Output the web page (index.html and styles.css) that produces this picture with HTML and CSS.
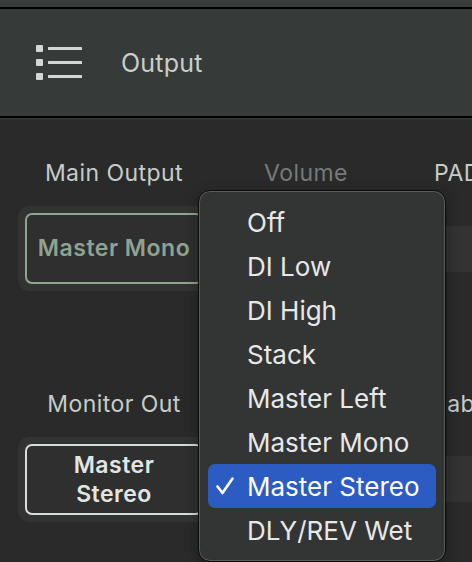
FILE: index.html
```html
<!DOCTYPE html>
<html>
<head>
<meta charset="utf-8">
<link rel="stylesheet" href="styles.css">
</head>
<body>
<div class="topstrip"></div>
<header class="header">
  <svg class="list-icon" viewBox="0 0 46 35" width="46" height="35">
    <rect x="0" y="0" width="7" height="7" rx="1"/>
    <rect x="0" y="14" width="7" height="7" rx="1"/>
    <rect x="0" y="28" width="7" height="7" rx="1"/>
    <rect x="12" y="2" width="34" height="3" rx="0.5"/>
    <rect x="12" y="16" width="34" height="3" rx="0.5"/>
    <rect x="12" y="30" width="34" height="3" rx="0.5"/>
  </svg>
  <span class="title">Output</span>
</header>
<main class="content">
  <div class="row">
    <div class="col col-select">
      <div class="label">Main Output</div>
      <div class="select-wrap"><div class="select select-green">Master Mono</div></div>
    </div>
    <div class="col col-mid"><div class="label label-dim">Volume</div></div>
    <div class="col col-right">
      <div class="label">PAD</div>
      <div class="track"></div>
    </div>
  </div>
  <div class="row row-second">
    <div class="col col-select">
      <div class="label">Monitor Out</div>
      <div class="select-wrap"><div class="select select-white">Master<br>Stereo</div></div>
    </div>
    <div class="col col-mid"></div>
    <div class="col col-right">
      <div class="label label-cab">Cab</div>
      <div class="track track-second"></div>
    </div>
  </div>
</main>
<div class="menu">
  <div class="item"><span class="check"></span>Off</div>
  <div class="item"><span class="check"></span>DI Low</div>
  <div class="item"><span class="check"></span>DI High</div>
  <div class="item"><span class="check"></span>Stack</div>
  <div class="item"><span class="check"></span>Master Left</div>
  <div class="item"><span class="check"></span>Master Mono</div>
  <div class="item item-selected"><span class="check"><svg viewBox="0 0 18 18" width="18" height="18"><path d="M1.5 9.5 L6.5 16 L16.5 1.5" fill="none" stroke="#ffffff" stroke-width="2.6" stroke-linecap="round" stroke-linejoin="round"/></svg></span>Master Stereo</div>
  <div class="item"><span class="check"></span>DLY/REV Wet</div>
</div>
</body>
</html>
```
FILE: styles.css
```css
html, body {
  margin: 0;
  padding: 0;
}
body {
  width: 472px;
  height: 562px;
  overflow: hidden;
  background: #2a2a2a;
  font-family: Inter, "Liberation Sans", sans-serif;
  position: relative;
}
.topstrip {
  height: 7px;
  background: #383c3a;
}
.header {
  height: 107px;
  background: #363a39;
  border-top: 2px solid #000;
  border-bottom: 2px solid #000;
  display: flex;
  align-items: center;
  padding-left: 36px;
}
.list-icon {
  fill: #d2d8d4;
  display: block;
}
.title {
  margin-left: 39px;
  font-size: 25px;
  color: #c9cecb;
  letter-spacing: 0.2px;
}
.content {
  border-top: 2px solid #313131;
  padding: 40px 0 0 18px;
}
.row {
  display: flex;
  width: 454px;
  overflow: hidden;
}
.row-second {
  margin-top: 100px;
}
.col {
  flex-shrink: 0;
  width: 192px;
}
.label {
  font-size: 23px;
  line-height: 26px;
  color: #c6ccc8;
  text-align: center;
  white-space: nowrap;
  letter-spacing: 0.45px;
}
.label-dim {
  color: #777a78;
}
.col-right {
  padding-left: 32px;
  width: 38px;
  overflow: hidden;
}
.col-right .label {
  text-align: left;
}
.label-cab {
  margin-left: -4px;
}
.select-wrap {
  margin-top: 20px;
  background: #333333;
  border-radius: 11px;
  padding: 7px;
}
.select {
  height: 67px;
  border-radius: 7px;
  background: #2f2f2f;
  display: flex;
  align-items: center;
  justify-content: center;
  text-align: center;
  font-size: 23px;
  font-weight: 600;
  line-height: 29px;
  letter-spacing: 0.5px;
}
.select-green {
  border: 2px solid #8fa692;
  color: #8ea391;
}
.select-white {
  border: 2px solid #d8ddd9;
  color: #e2e6e3;
}
.track {
  margin-top: 40px;
  margin-left: -20px;
  height: 46px;
  background: #333333;
}
.track-second {
  margin-top: 39px;
}
.menu {
  position: absolute;
  left: 198px;
  top: 190px;
  width: 228px;
  padding: 9px;
  border: 1px solid #0c0c0c;
  border-radius: 12px;
  background: #333534;
  box-shadow: inset 0 0 0 1px #595b5a, 0 4px 14px rgba(0,0,0,0.35);
}
.item {
  height: 44px;
  display: flex;
  align-items: center;
  padding-left: 8px;
  font-size: 26px;
  color: #e8e8e8;
  border-radius: 7px;
  white-space: nowrap;
}
.item-selected {
  background: #2c5bc1;
  color: #ffffff;
}
.check {
  width: 31px;
  height: 18px;
  flex-shrink: 0;
  display: flex;
  align-items: center;
}
.check svg {
  display: block;
}
```
